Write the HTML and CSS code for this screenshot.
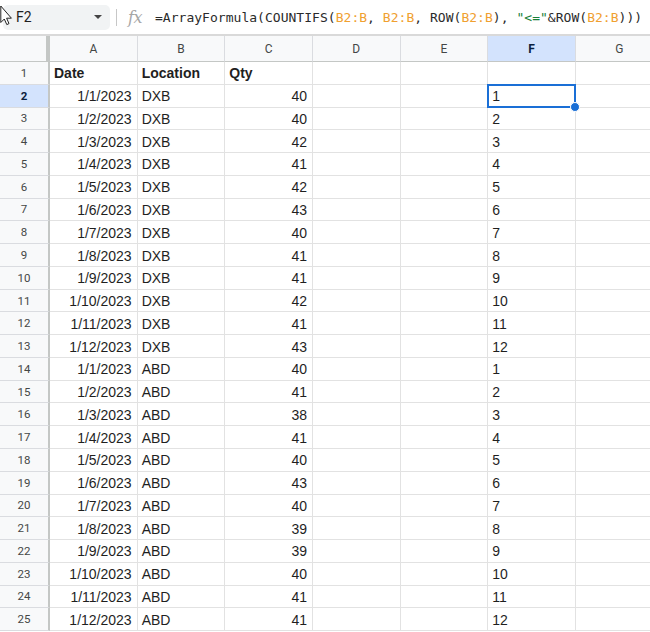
FILE: index.html
```html
<!DOCTYPE html>
<html>
<head>
<meta charset="utf-8">
<link rel="stylesheet" href="styles.css">
</head>
<body>
<div class="toolbar">
  <div class="namebox"><span class="ref">F2</span><span class="caret"></span></div>
  <div class="sep"></div>
  <span class="fx">fx</span>
  <div class="formula">=ArrayFormula(COUNTIFS(<span class="rng">B2:B</span>, <span class="rng">B2:B</span>, ROW(<span class="rng">B2:B</span>), <span class="str">"&lt;="</span>&amp;ROW(<span class="rng">B2:B</span>)))</div>
  <svg class="cursor" width="14" height="26" viewBox="0 0 14 26"><path d="M0.8 6 L0.8 22.5 L4.3 19 L6.8 24.6 L9 23.6 L6.6 18.2 L11.4 18.2 Z" fill="#fff" stroke="#222" stroke-width="1" stroke-linejoin="round"/></svg>
</div>
<div class="grid">
  <div class="corner"></div><div class="ch">A</div><div class="ch">B</div><div class="ch">C</div><div class="ch">D</div><div class="ch">E</div><div class="ch sel">F</div><div class="ch">G</div>

  <div class="rh">1</div><div class="c b">Date</div><div class="c b">Location</div><div class="c b">Qty</div><div class="c"></div><div class="c"></div><div class="c"></div><div class="c"></div>
  <div class="rh sel">2</div><div class="c r">1/1/2023</div><div class="c">DXB</div><div class="c r">40</div><div class="c"></div><div class="c"></div><div class="c active">1</div><div class="c"></div>
  <div class="rh">3</div><div class="c r">1/2/2023</div><div class="c">DXB</div><div class="c r">40</div><div class="c"></div><div class="c"></div><div class="c">2</div><div class="c"></div>
  <div class="rh">4</div><div class="c r">1/3/2023</div><div class="c">DXB</div><div class="c r">42</div><div class="c"></div><div class="c"></div><div class="c">3</div><div class="c"></div>
  <div class="rh">5</div><div class="c r">1/4/2023</div><div class="c">DXB</div><div class="c r">41</div><div class="c"></div><div class="c"></div><div class="c">4</div><div class="c"></div>
  <div class="rh">6</div><div class="c r">1/5/2023</div><div class="c">DXB</div><div class="c r">42</div><div class="c"></div><div class="c"></div><div class="c">5</div><div class="c"></div>
  <div class="rh">7</div><div class="c r">1/6/2023</div><div class="c">DXB</div><div class="c r">43</div><div class="c"></div><div class="c"></div><div class="c">6</div><div class="c"></div>
  <div class="rh">8</div><div class="c r">1/7/2023</div><div class="c">DXB</div><div class="c r">40</div><div class="c"></div><div class="c"></div><div class="c">7</div><div class="c"></div>
  <div class="rh">9</div><div class="c r">1/8/2023</div><div class="c">DXB</div><div class="c r">41</div><div class="c"></div><div class="c"></div><div class="c">8</div><div class="c"></div>
  <div class="rh">10</div><div class="c r">1/9/2023</div><div class="c">DXB</div><div class="c r">41</div><div class="c"></div><div class="c"></div><div class="c">9</div><div class="c"></div>
  <div class="rh">11</div><div class="c r">1/10/2023</div><div class="c">DXB</div><div class="c r">42</div><div class="c"></div><div class="c"></div><div class="c">10</div><div class="c"></div>
  <div class="rh">12</div><div class="c r">1/11/2023</div><div class="c">DXB</div><div class="c r">41</div><div class="c"></div><div class="c"></div><div class="c">11</div><div class="c"></div>
  <div class="rh">13</div><div class="c r">1/12/2023</div><div class="c">DXB</div><div class="c r">43</div><div class="c"></div><div class="c"></div><div class="c">12</div><div class="c"></div>
  <div class="rh">14</div><div class="c r">1/1/2023</div><div class="c">ABD</div><div class="c r">40</div><div class="c"></div><div class="c"></div><div class="c">1</div><div class="c"></div>
  <div class="rh">15</div><div class="c r">1/2/2023</div><div class="c">ABD</div><div class="c r">41</div><div class="c"></div><div class="c"></div><div class="c">2</div><div class="c"></div>
  <div class="rh">16</div><div class="c r">1/3/2023</div><div class="c">ABD</div><div class="c r">38</div><div class="c"></div><div class="c"></div><div class="c">3</div><div class="c"></div>
  <div class="rh">17</div><div class="c r">1/4/2023</div><div class="c">ABD</div><div class="c r">41</div><div class="c"></div><div class="c"></div><div class="c">4</div><div class="c"></div>
  <div class="rh">18</div><div class="c r">1/5/2023</div><div class="c">ABD</div><div class="c r">40</div><div class="c"></div><div class="c"></div><div class="c">5</div><div class="c"></div>
  <div class="rh">19</div><div class="c r">1/6/2023</div><div class="c">ABD</div><div class="c r">43</div><div class="c"></div><div class="c"></div><div class="c">6</div><div class="c"></div>
  <div class="rh">20</div><div class="c r">1/7/2023</div><div class="c">ABD</div><div class="c r">40</div><div class="c"></div><div class="c"></div><div class="c">7</div><div class="c"></div>
  <div class="rh">21</div><div class="c r">1/8/2023</div><div class="c">ABD</div><div class="c r">39</div><div class="c"></div><div class="c"></div><div class="c">8</div><div class="c"></div>
  <div class="rh">22</div><div class="c r">1/9/2023</div><div class="c">ABD</div><div class="c r">39</div><div class="c"></div><div class="c"></div><div class="c">9</div><div class="c"></div>
  <div class="rh">23</div><div class="c r">1/10/2023</div><div class="c">ABD</div><div class="c r">40</div><div class="c"></div><div class="c"></div><div class="c">10</div><div class="c"></div>
  <div class="rh">24</div><div class="c r">1/11/2023</div><div class="c">ABD</div><div class="c r">41</div><div class="c"></div><div class="c"></div><div class="c">11</div><div class="c"></div>
  <div class="rh">25</div><div class="c r">1/12/2023</div><div class="c">ABD</div><div class="c r">41</div><div class="c"></div><div class="c"></div><div class="c">12</div><div class="c"></div>
</div>
</body>
</html>
```

FILE: styles.css
```css
* { box-sizing: border-box; }
html, body { margin: 0; padding: 0; background: #fff; }
body {
  width: 650px;
  height: 632px;
  overflow: hidden;
  font-family: "Liberation Sans", Arial, sans-serif;
  color: #1f1f1f;
}
.toolbar {
  position: relative;
  height: 36px;
  display: flex;
  align-items: center;
  border-bottom: 2px solid #d9d9d9;
  background: #fff;
}
.namebox {
  margin-left: 3px;
  width: 107px;
  height: 25px;
  background: #f1f3f4;
  border-radius: 5px;
  display: flex;
  align-items: center;
  justify-content: space-between;
  padding: 0 8px 0 13px;
}
.ref {
  font-family: Roboto, "Liberation Sans", sans-serif;
  font-size: 14px;
  color: #1f1f1f;
}
.caret {
  width: 0;
  height: 0;
  border-left: 4px solid transparent;
  border-right: 4px solid transparent;
  border-top: 4px solid #444;
}
.sep {
  width: 1px;
  height: 17px;
  background: #c7c7c7;
  margin-left: 6px;
}
.fx {
  margin-left: 11px;
  font-family: "DejaVu Serif", "Liberation Serif", serif;
  font-style: italic;
  font-size: 16px;
  color: #a6a6a6;
  letter-spacing: -0.5px;
}
.formula {
  margin-left: 13px;
  font-family: "DejaVu Sans Mono", "Liberation Mono", monospace;
  font-size: 13px;
  letter-spacing: 0.03px;
  color: #2a2a2a;
  white-space: nowrap;
}
.rng { color: #f0a030; }
.str { color: #188038; }
.cursor {
  position: absolute;
  left: 0;
  top: 0;
}
.grid {
  display: grid;
  grid-template-columns: 50px repeat(7, 87.67px);
  grid-template-rows: 26px repeat(25, 22.78px);
}
.corner {
  background: #f8f9fa;
  border-right: 4px solid #c4c7c5;
  border-bottom: 1px solid #c4c7c5;
}
.ch {
  background: #f8f9fa;
  border-right: 1px solid #dadce0;
  border-bottom: 1px solid #c4c7c5;
  display: flex;
  align-items: center;
  justify-content: center;
  padding-top: 1px;
  font-family: Roboto, "Liberation Sans", sans-serif;
  font-size: 12px;
  color: #444746;
}
.ch.sel {
  background: #d3e3fd;
  color: #0b1f3f;
  font-weight: 700;
}
.rh {
  background: #f8f9fa;
  border-right: 2px solid #c4c7c5;
  border-bottom: 1px solid #dadce0;
  display: flex;
  align-items: center;
  justify-content: center;
  font-family: Roboto, "Liberation Sans", sans-serif;
  font-size: 11.5px;
  color: #444746;
}
.rh.sel {
  background: #d3e3fd;
  color: #0b1f3f;
  font-weight: 700;
}
.c {
  border-right: 1px solid #e2e2e2;
  border-bottom: 1px solid #e2e2e2;
  display: flex;
  align-items: center;
  padding: 1px 5px 0 4px;
  font-size: 14px;
  white-space: nowrap;
  overflow: visible;
}
.c.r { justify-content: flex-end; }
.c.b { font-weight: 700; }
.c.active { position: relative; }
.c.active::before {
  content: "";
  position: absolute;
  left: -1px;
  top: -1px;
  right: -1px;
  bottom: -1px;
  border: 2px solid #1a6fd6;
}
.c.active::after {
  content: "";
  position: absolute;
  right: -5px;
  bottom: -5px;
  width: 8px;
  height: 8px;
  border-radius: 50%;
  background: #1a6fd6;
  border: 1px solid #fff;
}
```
